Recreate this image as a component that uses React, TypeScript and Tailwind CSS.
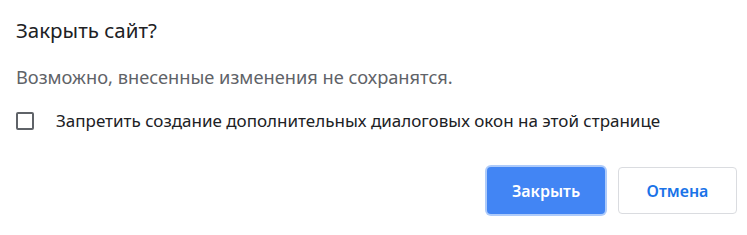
import React from 'react';

const App: React.FC = () => {
    return (
        <div className="w-[747px] h-[235px] bg-white font-['Segoe_UI','Noto_Sans',sans-serif] text-[#202124]">
            <div className="pl-4 pr-[10px] pt-4">
                <h1 className="text-[20.5px] leading-[28px] font-normal">Закрыть сайт?</h1>
                <p className="mt-[21px] text-[18.25px] leading-[24px] text-[#5f6368]">Возможно, внесенные изменения не сохранятся.</p>
                <label className="mt-5 flex items-center">
                    <span className="w-[18px] h-[18px] border-2 border-[#5f6368] rounded-[2px] shrink-0" />
                    <span className="ml-[22px] text-[17px] leading-[24px] text-[#202124]">Запретить создание дополнительных диалоговых окон на этой странице</span>
                </label>
                <div className="mt-[34px] flex justify-end gap-[13px]">
                    <button className="w-[118px] h-[47px] rounded-[4px] bg-[#4285f4] text-white text-[16px] font-semibold ring-2 ring-[#aecbfa]">Закрыть</button>
                    <button className="w-[119px] h-[47px] rounded-[4px] bg-white border border-[#dadce0] text-[#1a73e8] text-[16px] font-semibold">Отмена</button>
                </div>
            </div>
        </div>
    );
};

export default App;
